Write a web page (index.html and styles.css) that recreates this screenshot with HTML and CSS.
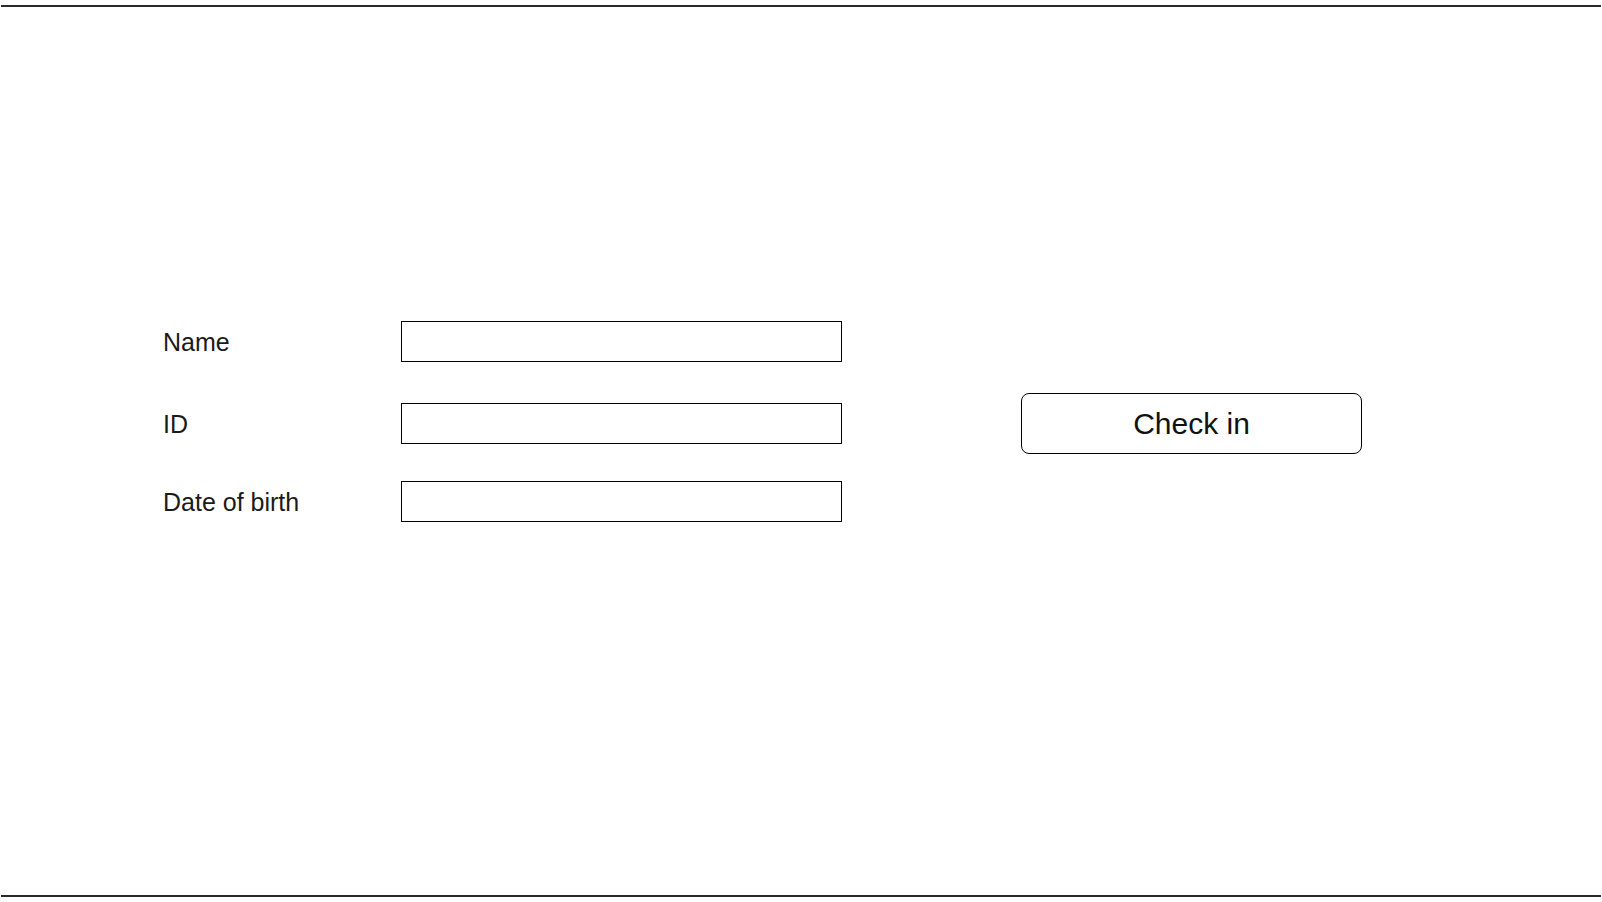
FILE: index.html
```html
<!DOCTYPE html>
<html lang="en">
<head>
<meta charset="utf-8">
<title>Check in</title>
<link rel="stylesheet" href="styles.css">
</head>
<body>
<div class="page">
  <div class="rule rule-top"></div>
  <main class="content">
    <form class="checkin">
      <div class="fields">
        <div class="row">
          <label class="label" for="name">Name</label>
          <input class="field" id="name" type="text">
        </div>
        <div class="row row-id">
          <label class="label" for="id">ID</label>
          <input class="field" id="id" type="text">
        </div>
        <div class="row row-dob">
          <label class="label" for="dob">Date of birth</label>
          <input class="field" id="dob" type="text">
        </div>
      </div>
      <button class="btn" type="button">Check in</button>
    </form>
  </main>
  <div class="rule rule-bottom"></div>
</div>
</body>
</html>
```

FILE: styles.css
```css
* { box-sizing: border-box; }

html, body {
  margin: 0;
  padding: 0;
  background: #ffffff;
}

body {
  font-family: "Liberation Sans", Arial, sans-serif;
  color: #1a1a1a;
}

.page {
  width: 1602px;
  height: 902px;
  display: flex;
  flex-direction: column;
}

.rule {
  height: 2px;
  margin: 0 1px;
  background: #2a2a2a;
}

.rule-top { margin-top: 5px; }

.content {
  height: 888px;
  padding: 314px 0 0 163px;
}

.checkin {
  display: flex;
  align-items: center;
}

.fields {
  display: flex;
  flex-direction: column;
}

.row {
  display: flex;
  align-items: center;
  height: 41px;
}

.row-id { margin-top: 41px; }
.row-dob { margin-top: 37px; }

.label {
  width: 238px;
  padding-top: 2px;
  font-size: 25px;
  color: #1a1a1a;
}

.field {
  width: 441px;
  height: 41px;
  margin: 0;
  border: 1px solid #000;
  border-radius: 0;
  background: #fff;
  padding: 0 8px;
  font: inherit;
  outline: none;
}

.btn {
  margin-left: 179px;
  margin-top: 3px;
  width: 341px;
  height: 61px;
  border: 1px solid #000;
  border-radius: 8px;
  background: #fff;
  font-family: "Liberation Sans", Arial, sans-serif;
  font-size: 30px;
  color: #111;
  padding: 1px 0 0;
  cursor: pointer;
}
```
